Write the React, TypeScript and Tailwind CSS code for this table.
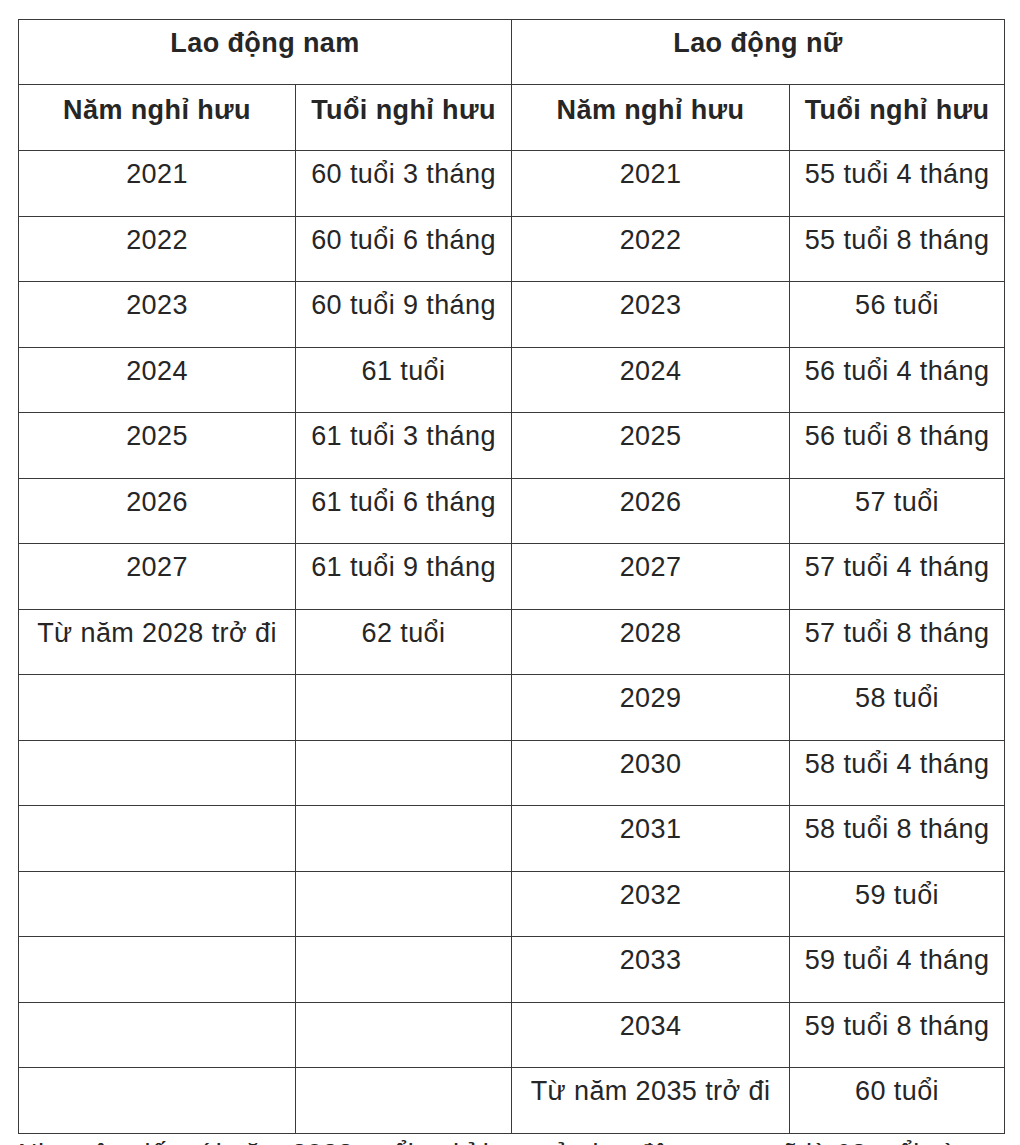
const MALE: [string, string][] = [
  ['2021', '60 tuổi 3 tháng'],
  ['2022', '60 tuổi 6 tháng'],
  ['2023', '60 tuổi 9 tháng'],
  ['2024', '61 tuổi'],
  ['2025', '61 tuổi 3 tháng'],
  ['2026', '61 tuổi 6 tháng'],
  ['2027', '61 tuổi 9 tháng'],
  ['Từ năm 2028 trở đi', '62 tuổi'],
];

const FEMALE: [string, string][] = [
  ['2021', '55 tuổi 4 tháng'],
  ['2022', '55 tuổi 8 tháng'],
  ['2023', '56 tuổi'],
  ['2024', '56 tuổi 4 tháng'],
  ['2025', '56 tuổi 8 tháng'],
  ['2026', '57 tuổi'],
  ['2027', '57 tuổi 4 tháng'],
  ['2028', '57 tuổi 8 tháng'],
  ['2029', '58 tuổi'],
  ['2030', '58 tuổi 4 tháng'],
  ['2031', '58 tuổi 8 tháng'],
  ['2032', '59 tuổi'],
  ['2033', '59 tuổi 4 tháng'],
  ['2034', '59 tuổi 8 tháng'],
  ['Từ năm 2035 trở đi', '60 tuổi'],
];

const cell = 'border border-[#3a3a3a] px-0 pt-[8px] align-top text-center whitespace-nowrap';

export default function App() {
  return (
    <div
      className="bg-white text-[#262626] text-[27px] leading-[31px] tracking-[0.4px] pt-[19px] pl-[18px] w-[1020px] h-[1145px] overflow-hidden"
      style={{ fontFamily: '"Liberation Sans", Arial, sans-serif' }}
    >
      <table className="table-fixed border-collapse w-[986px]">
        <colgroup>
          <col className="w-[277px]" />
          <col className="w-[216px]" />
          <col className="w-[278px]" />
          <col className="w-[215px]" />
        </colgroup>
        <thead>
          <tr className="h-[65px]">
            <th colSpan={2} className={`${cell} font-bold`}>Lao động nam</th>
            <th colSpan={2} className={`${cell} font-bold`}>Lao động nữ</th>
          </tr>
          <tr className="h-[66px]">
            <th className={`${cell} font-bold pt-[10px]`}>Năm nghỉ hưu</th>
            <th className={`${cell} font-bold pt-[10px]`}>Tuổi nghỉ hưu</th>
            <th className={`${cell} font-bold pt-[10px]`}>Năm nghỉ hưu</th>
            <th className={`${cell} font-bold pt-[10px]`}>Tuổi nghỉ hưu</th>
          </tr>
        </thead>
        <tbody>
          {FEMALE.map((f, i) => {
            const m = MALE[i];
            return (
              <tr key={i} className="h-[65.5px]">
                <td className={cell}>{m ? m[0] : ''}</td>
                <td className={cell}>{m ? m[1] : ''}</td>
                <td className={cell}>{f[0]}</td>
                <td className={cell}>{f[1]}</td>
              </tr>
            );
          })}
        </tbody>
      </table>
      <p className="mt-[5px] whitespace-nowrap">
        Như vậy, tiến tới năm 2028, tuổi nghỉ hưu của lao động nam sẽ là 62 tuổi và
      </p>
    </div>
  );
}
